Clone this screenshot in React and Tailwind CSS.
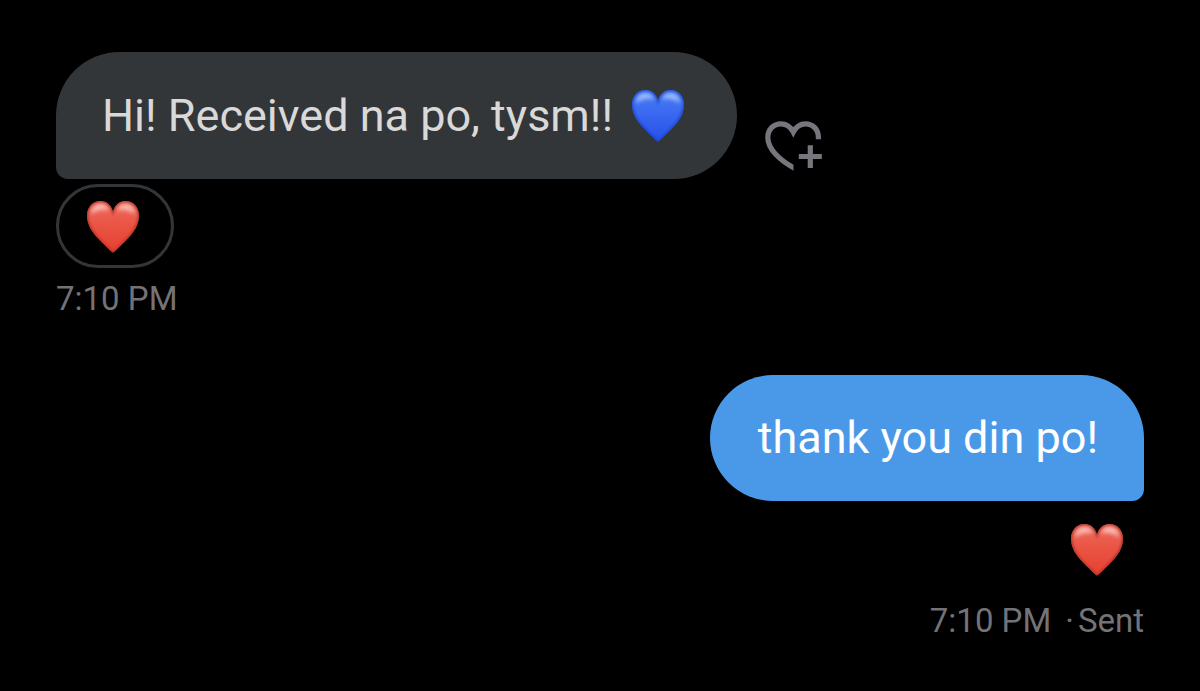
const HEART_PATH =
  "M27 52.500C25.800 52.500 21 47.500 13.500 40C5.500 32 1 24.500 1 15.500C1 7 7 1 14.500 1C20.500 1 25 5 27 11.500C29 5 33.500 1 39.500 1C47 1 53 7 53 15.500C53 24.500 48.500 32 40.500 40C33 47.500 28.200 52.500 27 52.500Z";

const TONES = {
  red: { top: "#ee6c5f", middle: "#ea5545", bottom: "#e5402f", edge: "#a32c20", shine: "#fbd0c9" },
  blue: { top: "#4a7df4", middle: "#3b69f0", bottom: "#2450e8", edge: "#1740cc", shine: "#b0cbfb" },
};

function Heart({ tone, label }) {
  const colors = TONES[tone];
  const id = `heart-${tone}`;
  return (
    <svg viewBox="0 0 54 53" className="h-[53px] w-[54px] shrink-0" role="img" aria-label={label}>
      <defs>
        <linearGradient id={`${id}-fill`} x1="0" y1="0" x2="0" y2="1">
          <stop offset="0" stopColor={colors.top} />
          <stop offset="0.45" stopColor={colors.middle} />
          <stop offset="1" stopColor={colors.bottom} />
        </linearGradient>
        <filter id={`${id}-soft`} x="-30%" y="-30%" width="160%" height="160%">
          <feGaussianBlur stdDeviation="2" />
        </filter>
        <filter id={`${id}-rim`} x="-20%" y="-20%" width="140%" height="140%">
          <feGaussianBlur stdDeviation="0.9" />
        </filter>
        <clipPath id={`${id}-clip`}>
          <path d={HEART_PATH} />
        </clipPath>
      </defs>
      <g clipPath={`url(#${id}-clip)`}>
        <rect width="54" height="53" fill={`url(#${id}-fill)`} />
        <g fill={colors.shine} fillOpacity="0.85" filter={`url(#${id}-soft)`}>
          <path d="M5 14C5 8 9 4 14.500 4C19 4 22 6 23.500 10C20 9.500 17 9 14 10C10 11 7 12.500 5 14Z" />
          <path d="M49 14C49 8 45 4 39.500 4C35 4 32 6 30.500 10C34 9.500 37 9 40 10C44 11 47 12.500 49 14Z" />
        </g>
        <path d={HEART_PATH} fill="none" stroke={colors.edge} strokeOpacity="0.8" strokeWidth="2.5" filter={`url(#${id}-rim)`} />
      </g>
    </svg>
  );
}

function HeartPlusIcon() {
  return (
    <svg viewBox="0 0 58 50" className="h-[50px] w-[58px]" fill="none" stroke="currentColor" strokeWidth="5.2" aria-hidden="true">
      <defs>
        <clipPath id="heart-outline">
          <path d="M0 0H58V18.200H28.500V50H0Z" />
        </clipPath>
      </defs>
      <path
        clipPath="url(#heart-outline)"
        d="M34 49.500C14 40 2.800 27.500 2.800 16.500C2.800 8.500 8.500 2.800 16 2.800C21.500 2.800 25.500 5.500 28.300 11C31.100 5.500 35.100 2.800 40.500 2.800C48 2.800 53.400 8.500 53.400 16.500V22"
      />
      <path d="M45.300 24.200V47M33.800 35.500H56.800" />
    </svg>
  );
}

function Meta({ children }) {
  return <p className="flex text-[33px] leading-10 text-[#737377]">{children}</p>;
}

export default function App() {
  return (
    <main className="flex min-h-screen flex-col bg-black px-14 pt-[52px] pb-10 font-['Roboto',sans-serif]">
      <section className="flex flex-col items-start">
        <div className="flex items-end gap-7">
          <div className="flex min-h-[127px] items-center gap-[18px] rounded-[64px] rounded-bl-xl bg-[#333639] pr-[52px] pl-[46px]">
            <p className="text-[45px] leading-[54px] text-[#d9d9d9]">Hi! Received na po, tysm!!</p>
            <Heart tone="blue" label="Blue heart" />
          </div>
          <button type="button" aria-label="Add reaction" className="mb-2 text-[#76767c]">
            <HeartPlusIcon />
          </button>
        </div>
        <button
          type="button"
          className="mt-[5px] flex h-[84px] w-[118px] items-center justify-center rounded-full border-3 border-[#333639] pr-1"
        >
          <Heart tone="red" label="Red heart" />
        </button>
        <div className="mt-[11px]">
          <Meta>7:10 PM</Meta>
        </div>
      </section>

      <section className="mt-14 flex flex-col items-end">
        <div className="flex min-h-[126px] items-center rounded-[63px] rounded-br-xl bg-[#4a99e9] pr-[46px] pl-12">
          <p className="text-[45px] leading-[54px] text-white">thank you din po!</p>
        </div>
        <div className="mt-[22px] mr-5">
          <Heart tone="red" label="Red heart" />
        </div>
        <div className="mt-[25px]">
          <Meta>
            <span>7:10 PM</span>
            <span className="ml-3.5">·</span>
            <span className="ml-1">Sent</span>
          </Meta>
        </div>
      </section>
    </main>
  );
}
